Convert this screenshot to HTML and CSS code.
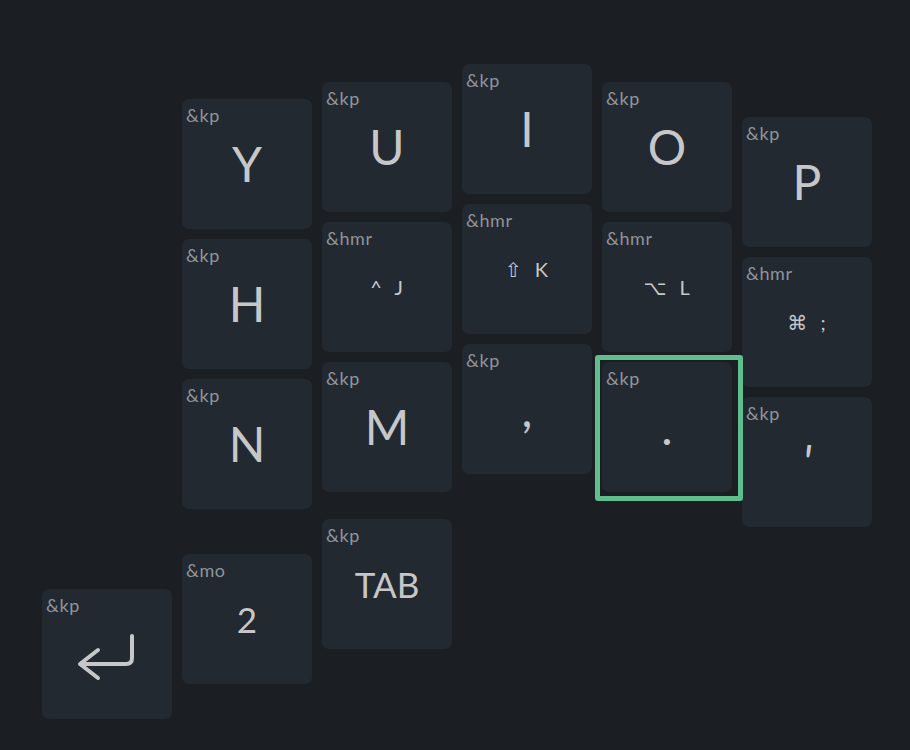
FILE: index.html
```html
<!DOCTYPE html>
<html>
<head>
<meta charset="utf-8">
<link rel="stylesheet" href="styles.css">
</head>
<body>
<div class="canvas">
  <div class="key" style="left:182px;top:99px"><span class="label">&amp;kp</span><span class="legend">Y</span></div>
  <div class="key" style="left:322px;top:82px"><span class="label">&amp;kp</span><span class="legend">U</span></div>
  <div class="key" style="left:462px;top:64px"><span class="label">&amp;kp</span><span class="legend">I</span></div>
  <div class="key" style="left:602px;top:82px"><span class="label">&amp;kp</span><span class="legend">O</span></div>
  <div class="key" style="left:742px;top:117px"><span class="label">&amp;kp</span><span class="legend">P</span></div>

  <div class="key" style="left:182px;top:239px"><span class="label">&amp;kp</span><span class="legend">H</span></div>
  <div class="key" style="left:322px;top:222px"><span class="label">&amp;hmr</span><span class="legend small">^&nbsp; J</span></div>
  <div class="key" style="left:462px;top:204px"><span class="label">&amp;hmr</span><span class="legend small"><span class="sym">⇧</span>&nbsp; K</span></div>
  <div class="key" style="left:602px;top:222px"><span class="label">&amp;hmr</span><span class="legend small"><span class="sym">⌥</span>&nbsp; L</span></div>
  <div class="key" style="left:742px;top:257px"><span class="label">&amp;hmr</span><span class="legend small"><span class="sym">⌘</span>&nbsp; ;</span></div>

  <div class="key" style="left:182px;top:379px"><span class="label">&amp;kp</span><span class="legend">N</span></div>
  <div class="key" style="left:322px;top:362px"><span class="label">&amp;kp</span><span class="legend">M</span></div>
  <div class="key" style="left:462px;top:344px"><span class="label">&amp;kp</span><span class="legend">,</span></div>
  <div class="key" style="left:602px;top:362px"><span class="label">&amp;kp</span><span class="legend">.</span></div>
  <div class="key" style="left:742px;top:397px"><span class="label">&amp;kp</span><span class="legend apos">'</span></div>

  <div class="selection" style="left:595px;top:355px"></div>

  <div class="key" style="left:42px;top:589px"><span class="label">&amp;kp</span>
    <svg class="legend icon" width="130" height="130" viewBox="0 0 130 130">
      <path d="M90 47 V69 Q90 75 84 75 H39" fill="none" stroke="#c6c7c8" stroke-width="4" stroke-linecap="round" stroke-linejoin="round"/>
      <path d="M56 61 L38 75 L56 89" fill="none" stroke="#c6c7c8" stroke-width="4" stroke-linecap="round" stroke-linejoin="round"/>
    </svg>
  </div>
  <div class="key" style="left:182px;top:554px"><span class="label">&amp;mo</span><span class="legend mid">2</span></div>
  <div class="key" style="left:322px;top:519px"><span class="label">&amp;kp</span><span class="legend mid">TAB</span></div>
</div>
</body>
</html>
```

FILE: styles.css
```css
html, body {
  margin: 0;
  padding: 0;
  background: #1b1e22;
}
body {
  width: 910px;
  height: 750px;
  overflow: hidden;
  font-family: Lato, "Noto Sans", "DejaVu Sans", sans-serif;
}
.canvas {
  position: relative;
  width: 910px;
  height: 750px;
}
.key {
  position: absolute;
  width: 130px;
  height: 130px;
  border-radius: 7px;
  background: #232931;
  display: grid;
  grid-template-areas: "cell";
}
.label {
  grid-area: cell;
  align-self: start;
  justify-self: start;
  padding: 6px 0 0 4px;
  font-size: 18px;
  line-height: 20px;
  color: #8f949b;
  letter-spacing: 0.6px;
}
.legend {
  grid-area: cell;
  align-self: center;
  justify-self: center;
  font-size: 48px;
  line-height: 1;
  color: #c6c7c8;
}
.legend.mid {
  font-size: 35px;
}
.legend.small {
  font-size: 20px;
  letter-spacing: 1px;
}
.legend.apos {
  font-style: italic;
}
.sym {
  font-family: "DejaVu Sans", sans-serif;
  font-weight: 400;
  font-size: 20px;
}
.icon {
  display: block;
}
.selection {
  position: absolute;
  width: 148px;
  height: 146px;
  box-sizing: border-box;
  border: 5px solid #5fbd8e;
  border-radius: 3px;
}
```
